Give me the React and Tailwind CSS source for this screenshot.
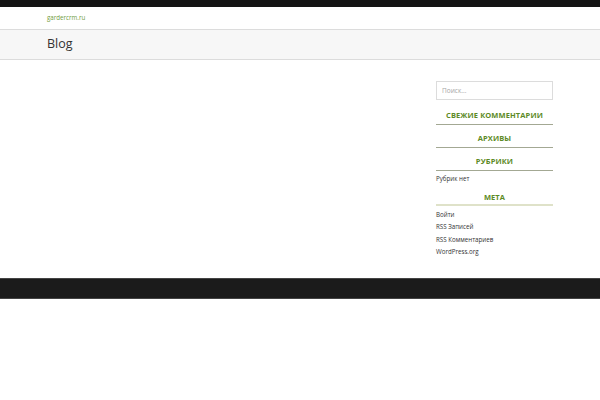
import React from 'react';

const font = { fontFamily: '"Open Sans", "Noto Sans", sans-serif' };

function WidgetTitle({ children, className = 'pb-[3px] border-b border-[#a3a893]' }) {
  return (
    <h3
      className={`text-center text-[7.5px] font-bold uppercase leading-[12px] tracking-[0.1px] text-[#5c8a26] ${className}`}
    >
      {children}
    </h3>
  );
}

export default function App() {
  const metaLinks = ['Войти', 'RSS Записей', 'RSS Комментариев', 'WordPress.org'];

  return (
    <div className="min-h-[400px] bg-white text-[#333]" style={font}>
      <div className="h-[7px] bg-[#141414]"></div>

      <header className="flex h-[23px] items-center border-b border-[#dcdcdc] px-[47px]">
        <a className="text-[6.2px] leading-none text-[#6f9c3d]">gardercrm.ru</a>
      </header>

      <div className="flex h-[30px] items-center border-b border-[#dcdcdc] bg-[#f7f7f7] px-[47px]">
        <h1 className="text-[12.5px] leading-none text-[#333]">Blog</h1>
      </div>

      <main className="flex px-[47px] pb-[19px] pt-[21px]">
        <div className="flex-1"></div>

        <aside className="flex w-[117px] flex-col">
          <input
            type="search"
            placeholder="Поиск..."
            className="h-[19px] w-full border border-[#dcdcdc] bg-white px-[5px] text-[6.5px] text-[#555] placeholder:text-[#a5a5a5] focus:outline-none"
          />

          <div className="mt-[9px]">
            <WidgetTitle>Свежие комментарии</WidgetTitle>
          </div>
          <div className="mt-[7px]">
            <WidgetTitle>Архивы</WidgetTitle>
          </div>
          <div className="mt-[7px]">
            <WidgetTitle>Рубрики</WidgetTitle>
            <ul className="mt-[2px] text-[6.2px] leading-[12px] text-[#333]">
              <li>Рубрик нет</li>
            </ul>
          </div>
          <div className="mt-[6px]">
            <WidgetTitle className="pb-[1px] border-b-2 border-[#dfe2c9]">Мета</WidgetTitle>
            <ul className="mt-[3px] text-[6.2px] leading-[12.4px] text-[#333]">
              {metaLinks.map((l) => (
                <li key={l}>
                  <a>{l}</a>
                </li>
              ))}
            </ul>
          </div>
        </aside>
      </main>

      <footer className="h-[21px] border-y border-[#444] bg-[#1b1b1b]"></footer>
    </div>
  );
}
